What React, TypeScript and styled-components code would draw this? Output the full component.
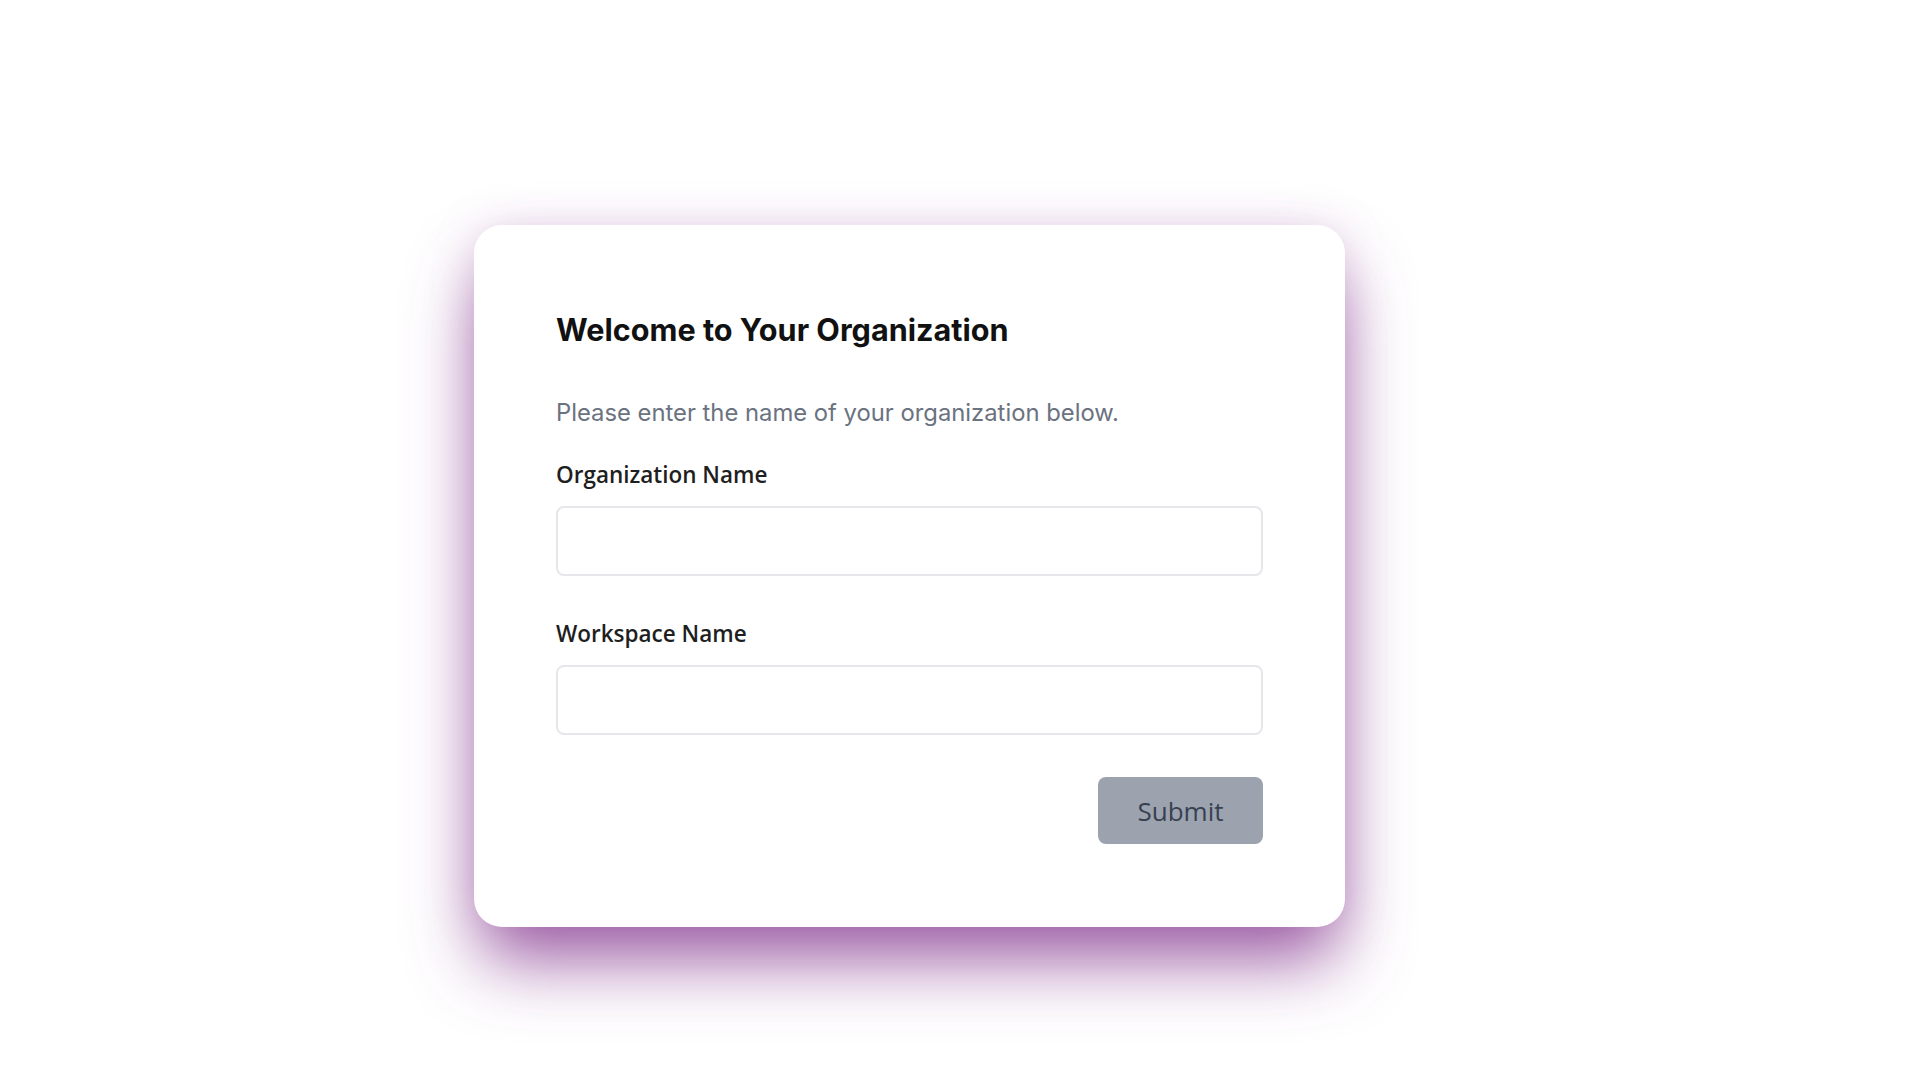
import React, { useState } from "react";
import styled, { createGlobalStyle } from "styled-components";

const GlobalStyle = createGlobalStyle`
  html, body {
    margin: 0;
    padding: 0;
    background: #ffffff;
  }
  * {
    box-sizing: border-box;
  }
`;

const App: React.FC = () => {
  const [orgName, setOrgName] = useState("");
  const [workspaceName, setWorkspaceName] = useState("");

  const handleSubmit = (e: React.FormEvent) => {
    e.preventDefault();
  };

  return (
    <>
      <GlobalStyle />
      <Page>
        <Card>
          <Title>Welcome to Your Organization</Title>
          <Subtitle>Please enter the name of your organization below.</Subtitle>
          <Form onSubmit={handleSubmit}>
            <Field>
              <Label htmlFor="org">Organization Name</Label>
              <Input
                id="org"
                type="text"
                value={orgName}
                onChange={(e) => setOrgName(e.target.value)}
              />
            </Field>
            <Field>
              <Label htmlFor="workspace">Workspace Name</Label>
              <Input
                id="workspace"
                type="text"
                value={workspaceName}
                onChange={(e) => setWorkspaceName(e.target.value)}
              />
            </Field>
            <Actions>
              <Button type="submit">Submit</Button>
            </Actions>
          </Form>
        </Card>
      </Page>
    </>
  );
};

// Styled-components
const Page = styled.div`
  display: flex;
  align-items: flex-start;
  min-height: 100vh;
  padding: 225px 0 0 474px;
  font-family: Inter, "Noto Sans", sans-serif;
`;

const Card = styled.div`
  width: 871px;
  height: 702px;
  padding: 86px 82px 82px;
  background: #ffffff;
  border-radius: 28px;
  box-shadow: 0 40px 70px -8px rgba(130, 50, 140, 0.8),
    0 0 40px rgba(190, 140, 195, 0.25);
  display: flex;
  flex-direction: column;
`;

const Title = styled.h1`
  margin: 0;
  font-family: Inter, sans-serif;
  font-size: 30.6px;
  font-weight: 700;
  line-height: 38px;
  color: #111111;
`;

const Subtitle = styled.p`
  margin: 48px 0 0;
  font-family: Inter, sans-serif;
  font-size: 23.8px;
  line-height: 32px;
  color: #6b7280;
`;

const Form = styled.form`
  display: flex;
  flex-direction: column;
  gap: 44px;
  margin-top: 32px;
`;

const Field = styled.div`
  display: flex;
  flex-direction: column;
  gap: 17px;
`;

const Label = styled.label`
  font-family: "Open Sans", "Noto Sans", sans-serif;
  font-size: 22.5px;
  font-weight: 600;
  line-height: 28px;
  color: #1f1f1f;
`;

const Input = styled.input`
  width: 100%;
  height: 70px;
  padding: 0 16px;
  font-size: 18px;
  border: 2px solid #e5e7eb;
  border-radius: 8px;
  outline: none;

  &:focus {
    border-color: #c4b5fd;
  }
`;

const Actions = styled.div`
  display: flex;
  justify-content: flex-end;
  margin-top: -2px;
`;

const Button = styled.button`
  width: 165px;
  height: 67px;
  background: #9ca3af;
  color: #374151;
  border: none;
  border-radius: 8px;
  font-family: "Open Sans", "Noto Sans", sans-serif;
  font-size: 26px;
  cursor: pointer;
`;

export default App;
